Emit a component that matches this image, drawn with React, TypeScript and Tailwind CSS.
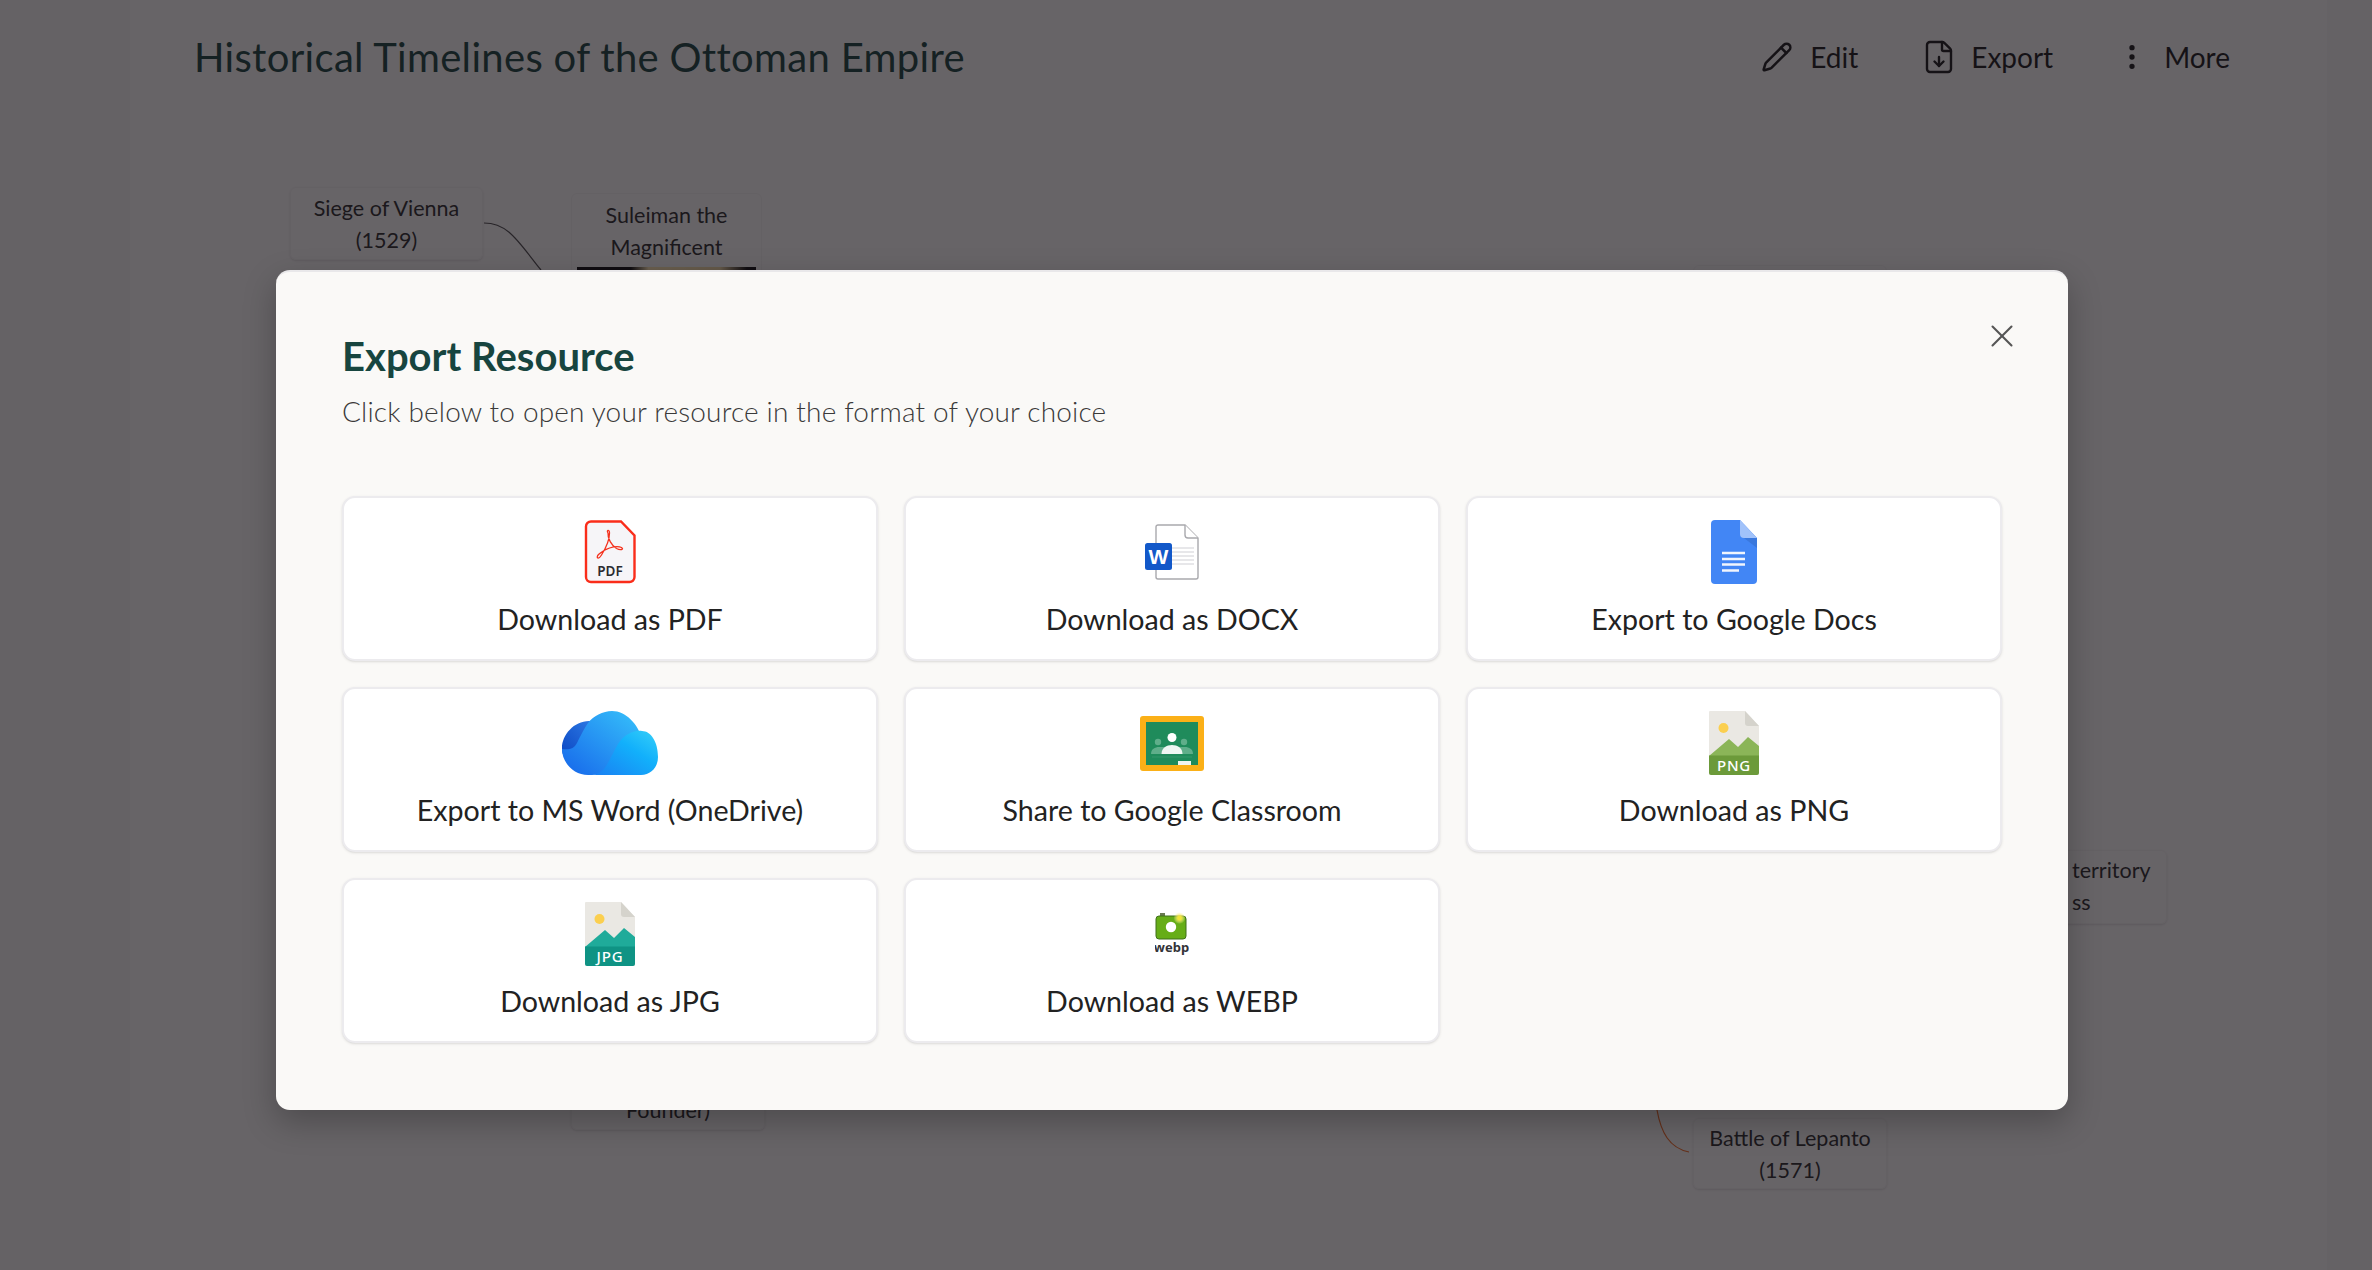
import { Pencil, FileDown, EllipsisVertical, X } from "lucide-react";

const PdfIcon = () => (
  <svg width="52" height="64" viewBox="0 0 52 64" fill="none">
    <path d="M7 1.500h30l13.500 14V57a5 5 0 0 1-5 5H7a5 5 0 0 1-5-5V6.500a5 5 0 0 1 5-5z" fill="#f6f5f8" stroke="#fa2d1a" strokeWidth="2.400" />
    <path d="M24 13c-2-3 1.500-4 1.500 0 0 5-3 14-8 22-3 5-6 3-3-.5 5-5 17-10 23-7 3 2-1 3-5 1-5-3-9-10-8.500-15.500" stroke="#f4321e" strokeWidth="1.300" />
    <text x="26" y="56" textAnchor="middle" fontSize="13.500" fontWeight="600" fill="#2b2b30" fontFamily="'Noto Sans',sans-serif">PDF</text>
  </svg>
);

const WordIcon = () => (
  <svg width="54" height="56" viewBox="0 0 54 56" fill="none">
    <path d="M13 1h27l13 13v39a2 2 0 0 1-2 2H13a2 2 0 0 1-2-2V3a2 2 0 0 1 2-2z" fill="#fff" stroke="#a9a9ad" strokeWidth="1.400" />
    <path d="M40 1v10a3 3 0 0 0 3 3h10" fill="#fff" stroke="#a9a9ad" strokeWidth="1.400" />
    <path d="M27 24h22M27 28h22M27 32h22M27 36h22M27 40h22" stroke="#cfcfd4" strokeWidth="1" />
    <rect x="0" y="19" width="27" height="27" rx="2.500" fill="#1258c9" />
    <text x="13.500" y="39.500" textAnchor="middle" fontSize="21" fontWeight="700" fill="#fff" fontFamily="'Liberation Sans',sans-serif">W</text>
  </svg>
);

const DocsIcon = () => (
  <svg width="46" height="64" viewBox="0 0 46 64" fill="none">
    <path d="M4 0h25l17 18v42a4 4 0 0 1-4 4H4a4 4 0 0 1-4-4V4a4 4 0 0 1 4-4z" fill="#4286f5" />
    <path d="M29 0l17 18H33a4 4 0 0 1-4-4z" fill="#a1c2fa" />
    <path d="M33 18h13l0 10z" fill="#3a78dd" />
    <path d="M11 33h23M11 39h23M11 44.500h23M11 50.500h17" stroke="#f1f5fd" strokeWidth="2.600" />
  </svg>
);

const CloudIcon = () => (
  <svg width="96" height="64" viewBox="0 0 96 64" fill="none">
    <defs>
      <linearGradient id="cloudA" x1="0" y1="1" x2="1" y2="0">
        <stop offset="0" stopColor="#0a45c2" />
        <stop offset="1" stopColor="#2f7de6" />
      </linearGradient>
      <linearGradient id="cloudB" x1="0" y1="1" x2="1" y2="0">
        <stop offset="0" stopColor="#1666ea" />
        <stop offset="1" stopColor="#37c3fb" />
      </linearGradient>
      <linearGradient id="cloudC" x1="0" y1="1" x2="1" y2="0">
        <stop offset="0" stopColor="#1a7ff2" />
        <stop offset="0.600" stopColor="#12b0fb" />
        <stop offset="1" stopColor="#36d0f8" />
      </linearGradient>
    </defs>
    <path d="M27 10C12 10 0 24 0 37c0 5 1 7 3 10 4 3 12-2 16-10 4-9 10-17 16-24-2-1-5-3-8-3z" fill="url(#cloudA)" />
    <path d="M50 0c-9 0-19 5-24 12-3 4-7 12-11 20-3 6-8 7-15 6 0 14 12 26 26 26h4c4 0 8-1 12-3 8-5 10-13 15-21 5-6 13-12 23-12C76 13 64 0 50 0z" fill="url(#cloudB)" />
    <path d="M80 20c-9-1-18 4-24 13-5 8-8 17-14 25-3 3-6 5-11 6h48c10 0 17-8 17-18 0-15-7-26-16-26z" fill="url(#cloudC)" />
  </svg>
);

const ClassroomIcon = () => (
  <svg width="64" height="55" viewBox="0 0 64 55" fill="none">
    <rect width="64" height="55" rx="3" fill="#fbb017" />
    <rect x="6" y="6" width="52" height="43" fill="#1f8b5b" />
    <circle cx="18" cy="26" r="3.200" fill="#5fae8a" />
    <circle cx="44" cy="26" r="3.200" fill="#5fae8a" />
    <path d="M11 38c0-5 4-7 8-7h26c4 0 8 2 8 7z" fill="#5fae8a" />
    <circle cx="32" cy="21.500" r="4.500" fill="#fff" />
    <path d="M21.500 38c0-6 5-9 10.500-9s10.500 3 10.500 9z" fill="#eef6f2" />
    <path d="M12 41h40" stroke="#3a9a70" strokeWidth="0.800" />
    <rect x="38" y="45" width="13" height="4" fill="#f1f5f1" />
  </svg>
);

const ImageFileIcon = ({ label, light, dark }: { label: string; light: string; dark: string }) => (
  <svg width="50" height="64" viewBox="0 0 50 64" fill="none">
    <path d="M1 0h35l14 15v47a2 2 0 0 1-2 2H2a2 2 0 0 1-2-2V1a1 1 0 0 1 1-1z" fill="#eae8e3" />
    <path d="M36 0l14 15H39a3 3 0 0 1-3-3z" fill="#d5d3cc" />
    <circle cx="14.500" cy="17" r="5" fill="#fbcf4f" />
    <path d="M0 45l20-17 9 8 10-10 11 9v10z" fill={light} />
    <path d="M0 44.500h50V62a2 2 0 0 1-2 2H2a2 2 0 0 1-2-2z" fill={dark} />
    <text x="25" y="60" textAnchor="middle" fontSize="15" fontWeight="500" fill="#fff" letterSpacing="0.800" fontFamily="'Noto Sans',sans-serif">{label}</text>
  </svg>
);

const WebpIcon = () => (
  <svg width="34" height="44" viewBox="0 0 34 44" fill="none">
    <defs>
      <radialGradient id="flash">
        <stop offset="0.300" stopColor="#f2e43c" />
        <stop offset="1" stopColor="#fff6a8" stopOpacity="0" />
      </radialGradient>
    </defs>
    <rect x="5" y="1" width="5" height="3" fill="#6a7a52" />
    <rect x="1" y="4" width="30" height="23" rx="3" fill="#66ad17" stroke="#3f6f1a" strokeWidth="1" />
    <circle cx="16" cy="15" r="5.200" fill="#fff" />
    <circle cx="24.500" cy="6" r="6" fill="url(#flash)" />
    <text x="16.500" y="40" textAnchor="middle" fontSize="13" fontWeight="700" fill="#333338" fontFamily="'Noto Sans',sans-serif">webp</text>
  </svg>
);

const exportOptions = [
  { label: "Download as PDF", icon: <PdfIcon /> },
  { label: "Download as DOCX", icon: <WordIcon /> },
  { label: "Export to Google Docs", icon: <DocsIcon /> },
  { label: "Export to MS Word (OneDrive)", icon: <CloudIcon /> },
  { label: "Share to Google Classroom", icon: <ClassroomIcon /> },
  { label: "Download as PNG", icon: <ImageFileIcon label="PNG" light="#8bb558" dark="#6c9a3a" /> },
  { label: "Download as JPG", icon: <ImageFileIcon label="JPG" light="#1fab9a" dark="#0f9384" /> },
  { label: "Download as WEBP", icon: <WebpIcon /> },
];

const App = () => {
  return (
    <div className="relative h-[1270px] w-full overflow-hidden bg-[#f4f3f1] font-['Lato',sans-serif]">
      <div className="ml-[130px] h-full w-[2197px] bg-[#faf9f7]">
        <header className="flex items-center justify-between pl-[64px] pr-[97px] pt-[34px]">
          <h1 className="text-[40px] leading-[46px] font-normal tracking-[0.32px] text-[#0f3a35]">Historical Timelines of the Ottoman Empire</h1>
          <div className="flex items-center gap-[63px] text-[28px] text-[#111]">
            <span className="flex items-center gap-[17px]">
              <Pencil size={32} strokeWidth={1.900} />
              Edit
            </span>
            <span className="flex items-center gap-[14px]">
              <FileDown size={36} strokeWidth={1.600} />
              Export
            </span>
            <span className="flex items-center gap-[16px]">
              <EllipsisVertical size={32} strokeWidth={2} />
              More
            </span>
          </div>
        </header>
      </div>

      {/* diagram nodes behind the dialog */}
      <div className="absolute left-[290px] top-[187px] flex h-[73px] w-[193px] flex-col items-center justify-center rounded-md border border-[#f1f0ee] text-center text-[21.5px] leading-[32px] text-[#222] shadow-sm">
        <span>Siege of Vienna</span>
        <span>(1529)</span>
      </div>
      <div className="absolute left-[571px] top-[193px] flex h-[100px] w-[191px] flex-col items-center rounded-md border border-[#f1f0ee] pt-[5px] text-center text-[21.5px] leading-[32px] text-[#222]">
        <span>Suleiman the</span>
        <span>Magnificent</span>
        <div className="mt-[4px] h-[20px] w-[179px] bg-[linear-gradient(90deg,#000_30%,#ffe9b0_40%,#f0d8a0_80%,#000_95%)]" />
      </div>
      <div className="absolute left-[571px] top-[1060px] flex h-[70px] w-[194px] items-end justify-center rounded-md border border-[#f1f0ee] pb-[3px] text-[21.5px] leading-[32px] text-[#222] shadow-sm">
        Founder)
      </div>
      <div className="absolute left-[2040px] top-[850px] flex h-[74px] w-[127px] flex-col rounded-md border border-[#f1f0ee] pl-[31px] pt-[3px] text-[21.5px] leading-[32px] text-[#222] shadow-sm">
        <span>territory</span>
        <span>ss</span>
      </div>
      <div className="absolute left-[1693px] top-[1118px] flex h-[71px] w-[194px] flex-col items-center justify-center rounded-md border border-[#f1f0ee] text-[21.5px] leading-[32px] text-[#222] shadow-sm">
        <span>Battle of Lepanto</span>
        <span>(1571)</span>
      </div>
      <div className="absolute left-[1693px] top-[265px] h-[40px] w-[194px] rounded-md border border-[#f1f0ee]" />
      <svg className="absolute left-0 top-0" width="2372" height="1270" fill="none">
        <path d="M484 223c25 0 35 20 57 47" stroke="#444" strokeWidth="1.200" />
        <path d="M1657 1110c4 22 12 38 32 42" stroke="#f0651a" strokeWidth="1.200" />
      </svg>

      <div className="absolute inset-0 bg-[#18141a]/[0.65] pl-[276px] pt-[270px]">
        <div className="relative h-[840px] w-[1792px] rounded-[14px] border-t-2 border-[#e9e8ea] bg-[#faf9f7] px-[66px] pt-[59px] shadow-[0_12px_32px_rgba(0,0,0,0.25)]">
          <button className="absolute right-[47px] top-[45px] text-[#555]">
            <X size={38} strokeWidth={1.300} />
          </button>
          <h2 className="text-[40px] leading-[50px] font-bold text-[#17453f]">Export Resource</h2>
          <p className="mt-[10px] text-[28px] leading-[40px] font-light tracking-[0.17px] text-[#3a3a3a]">Click below to open your resource in the format of your choice</p>
          <div className="mt-[65px] grid grid-cols-3 gap-[26px]">
            {exportOptions.map((option) => (
              <button
                key={option.label}
                className="flex flex-col items-center gap-[15px] rounded-[13px] border-2 border-[#ecebee] bg-white px-4 pt-[22px] pb-[20px] shadow-sm"
              >
                <span className="flex h-[64px] items-center justify-center">{option.icon}</span>
                <span className="text-[28.6px] leading-[40px] text-[#222]">{option.label}</span>
              </button>
            ))}
          </div>
        </div>
      </div>
    </div>
  );
};

export default App;
